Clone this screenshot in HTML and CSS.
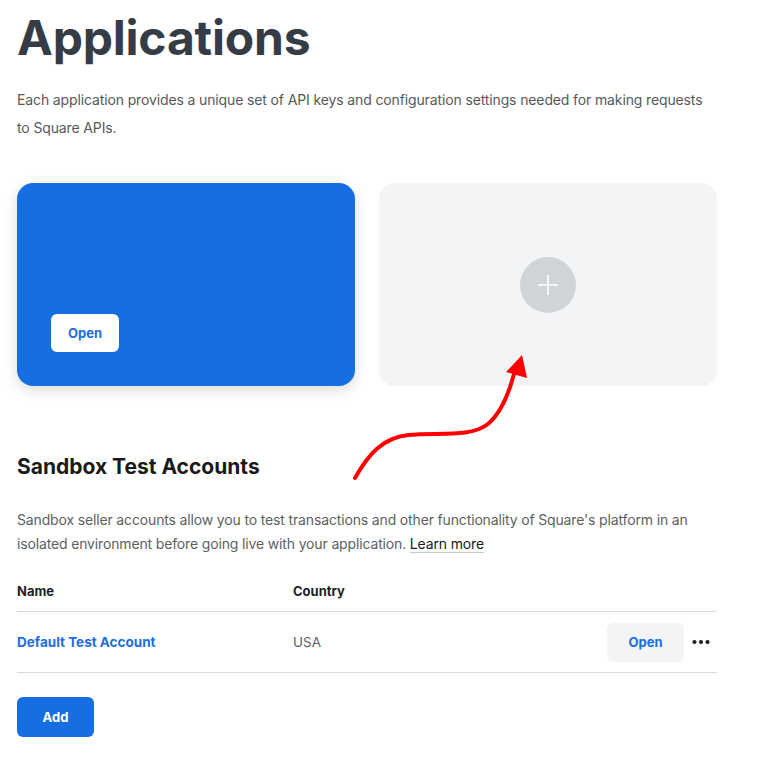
FILE: index.html
```html
<!DOCTYPE html>
<html>
<head>
<meta charset="utf-8">
<link rel="stylesheet" href="styles.css">
</head>
<body>
<main class="page">
  <h1 class="title">Applications</h1>
  <p class="intro">Each application provides a unique set of API keys and configuration settings needed for making requests to Square APIs.</p>

  <div class="cards">
    <div class="card card-app">
      <button class="btn-open-white">Open</button>
    </div>
    <div class="card card-new">
      <div class="plus-circle">
        <svg width="22" height="22" viewBox="0 0 22 22"><path d="M11 1v20M1 11h20" stroke="#fff" stroke-width="1.6" fill="none"/></svg>
      </div>
    </div>
  </div>

  <h2 class="section-title">Sandbox Test Accounts</h2>
  <p class="desc">Sandbox seller accounts allow you to test transactions and other functionality of Square's platform in an isolated environment before going live with your application. <a class="learn" href="#">Learn more</a></p>

  <div class="table">
    <div class="row head">
      <div class="c-name">Name</div>
      <div class="c-country">Country</div>
      <div class="c-actions"></div>
    </div>
    <div class="row body">
      <div class="c-name"><a class="acct" href="#">Default Test Account</a></div>
      <div class="c-country usa">USA</div>
      <div class="c-actions">
        <button class="btn-open-grey">Open</button>
        <svg class="more" width="18" height="6" viewBox="0 0 18 6"><circle cx="2.5" cy="3" r="2.1" fill="#1f1f1f"/><circle cx="9" cy="3" r="2.1" fill="#1f1f1f"/><circle cx="15.5" cy="3" r="2.1" fill="#1f1f1f"/></svg>
      </div>
    </div>
  </div>

  <button class="btn-add">Add</button>

  <svg class="arrow" width="759" height="776" viewBox="0 0 759 776">
    <path d="M355 478 C368 455 382 438 408 435 C438 432 470 438 488 424 C502 412 509 393 514 374" stroke="#ff0000" stroke-width="4" fill="none" stroke-linecap="round"/>
    <polygon points="522,355 506,372 527,378" fill="#ff0000"/>
  </svg>
</main>
</body>
</html>
```

FILE: styles.css
```css
* { box-sizing: border-box; }
html, body { margin: 0; padding: 0; background: #fff; }
body { font-family: "Inter", "Liberation Sans", sans-serif; color: #1f1f1f; }

.page {
  position: relative;
  width: 759px;
  min-height: 776px;
  padding: 0 42px 0 17px;
}

.title {
  margin: 0;
  padding-top: 10px;
  font-size: 48px;
  line-height: 56px;
  font-weight: 700;
  color: #363c46;
  letter-spacing: -0.2px;
}

.intro {
  margin: 20px 0 0;
  font-size: 14px;
  line-height: 28px;
  letter-spacing: -0.13px;
  color: #555a60;
  width: 700px;
}

.cards {
  display: grid;
  grid-template-columns: 338px 338px;
  gap: 24px;
  margin-top: 41px;
}

.card {
  height: 203px;
  border-radius: 16px;
}

.card-app {
  background: #166fe2;
  box-shadow: 0 4px 14px rgba(0,0,0,0.14);
  padding: 131px 0 0 34px;
}

.btn-open-white {
  width: 68px;
  height: 38px;
  border: 0;
  border-radius: 6px;
  background: #fff;
  color: #1c6ee0;
  font-family: inherit;
  font-size: 13px;
  font-weight: 700;
  padding: 0;
}

.card-new {
  background: #f3f4f6;
  display: flex;
  align-items: center;
  justify-content: center;
}

.plus-circle {
  width: 56px;
  height: 56px;
  border-radius: 50%;
  background: #d1d4d7;
  display: flex;
  align-items: center;
  justify-content: center;
}

.section-title {
  margin: 67px 0 0;
  font-size: 21px;
  line-height: 28px;
  font-weight: 700;
  color: #1a1a1a;
}

.desc {
  margin: 27px 0 0;
  font-size: 14px;
  line-height: 24px;
  letter-spacing: -0.15px;
  color: #5c5f63;
  width: 700px;
}

.learn {
  color: #1a1a1a;
  text-decoration: none;
  border-bottom: 1px solid #c8c8c8;
}

.table {
  margin-top: 27px;
  width: 700px;
}

.row {
  display: grid;
  grid-template-columns: 276px 1fr auto;
  align-items: center;
  border-bottom: 1px solid #dadada;
}

.row.head {
  padding-bottom: 12px;
  line-height: 16px;
  font-size: 13px;
  font-weight: 700;
  color: #1f1f1f;
}

.row.body {
  height: 61px;
  font-size: 13.5px;
}

.acct {
  color: #1c6ee0;
  font-weight: 700;
  text-decoration: none;
}

.usa { color: #5c5f63; }

.c-actions {
  display: flex;
  align-items: center;
  gap: 8px;
}

.btn-open-grey {
  width: 77px;
  height: 39px;
  border: 0;
  border-radius: 6px;
  background: #f3f4f6;
  color: #1c6ee0;
  font-family: inherit;
  font-size: 13px;
  font-weight: 700;
  padding: 0;
}

.more {
  display: block;
  margin-right: 7px;
}

.btn-add {
  display: block;
  margin-top: 24px;
  width: 77px;
  height: 40px;
  border: 0;
  border-radius: 6px;
  background: #166fe2;
  color: #fff;
  font-family: inherit;
  font-size: 13px;
  font-weight: 700;
  padding: 0;
}

.arrow {
  position: absolute;
  left: 0;
  top: 0;
  pointer-events: none;
}
```
